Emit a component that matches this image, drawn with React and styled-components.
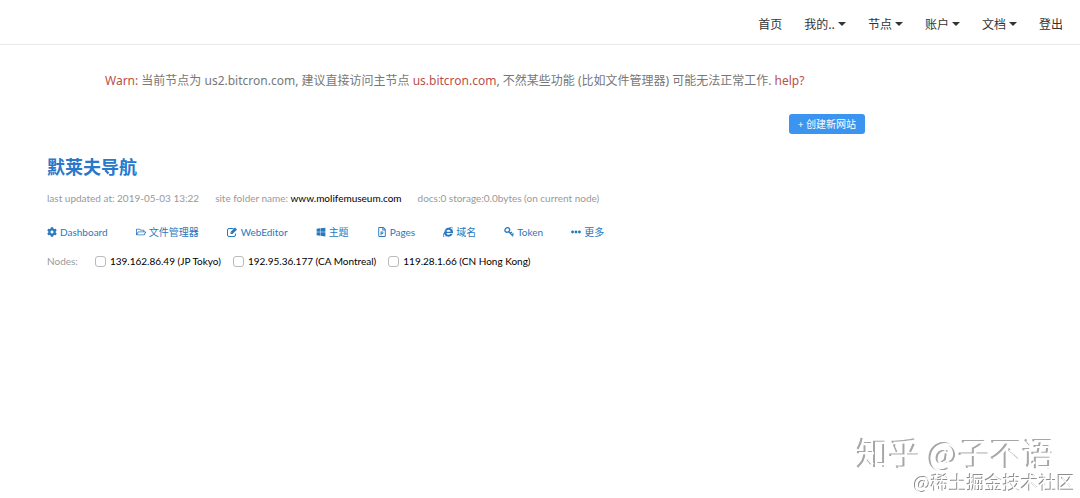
import React from "react";
import styled, { createGlobalStyle, css } from "styled-components";
import {
  FaCog,
  FaRegFolderOpen,
  FaWindows,
  FaRegFilePowerpoint,
  FaInternetExplorer,
  FaEllipsisH,
} from "react-icons/fa";

const GlobalStyle = createGlobalStyle`
  body {
    margin: 0;
    background: #FFFFFF;
    color: #333333;
    font-family: Lato, "Noto Sans CJK SC", sans-serif;
    font-size: 10px;
    line-height: 20px;
  }

  a {
    color: inherit;
    text-decoration: none;
  }
`;

const Page = styled.div`
  min-height: 100vh;
  display: flex;
  flex-direction: column;
`;

const Navbar = styled.nav`
  display: flex;
  justify-content: flex-end;
  gap: 22px;
  padding: 14px 17px 10px;
  border-bottom: 1px solid #E9E9E9;
  font-family: "Noto Sans CJK SC", sans-serif;
  font-size: 12px;
`;

const navItem = css`
  display: flex;
  align-items: center;
  gap: 3px;
  color: #333333;
`;

const NavLink = styled.a`
  ${navItem}
`;

const NavButton = styled.button`
  ${navItem}
  border: 0;
  padding: 0;
  background: none;
  font: inherit;
  cursor: pointer;
`;

const Caret = styled.span`
  border: 4px solid transparent;
  border-top-color: #333333;
  border-bottom-width: 0;
`;

const Main = styled.main`
  flex: 1;
  padding: 26px 47px 0;
`;

const Warning = styled.p`
  margin: 0 58px;
  font-family: "Noto Sans", "Noto Sans CJK SC", sans-serif;
  font-size: 12px;
  color: #777777;
`;

const WarnText = styled.span`
  color: #B9504B;
`;

const Toolbar = styled.div`
  display: flex;
  justify-content: flex-end;
  margin: 23px 168px 0 0;
`;

const CreateButton = styled.button`
  border: 0;
  border-radius: 3px;
  padding: 0 9px;
  background: #3A94F0;
  color: #FFFFFF;
  font: inherit;
  cursor: pointer;
`;

const SiteTitle = styled.h2`
  margin: 20px 0 8px;
  font-size: 18px;
  line-height: 26px;
  font-weight: 700;
  color: #2878CC;
`;

const Meta = styled.div`
  display: flex;
  gap: 16px;
  color: #999999;
`;

const FolderName = styled.span`
  color: #000000;
`;

const Actions = styled.div`
  display: flex;
  gap: 28px;
  margin-top: 14px;
`;

const Action = styled.a`
  && {
    color: #2878BD;
  }
  display: flex;
  align-items: center;
  gap: 3px;

  svg {
    height: 10px;
    width: auto;
  }
`;

const Nodes = styled.div`
  display: flex;
  gap: 12px;
  margin-top: 9px;
`;

const NodesTitle = styled.span`
  margin-right: 5px;
  color: #999999;
`;

const NodeLabel = styled.label`
  display: flex;
  align-items: center;
  gap: 4px;
  color: #000000;
`;

const Checkbox = styled.input`
  appearance: none;
  width: 11px;
  height: 11px;
  margin: 0;
  border: 1px solid #BBBBBB;
  border-radius: 3px;
  background: #FFFFFF;

  &:checked {
    background: #3A94F0;
  }
`;

const Credits = styled.footer`
  position: fixed;
  right: 5px;
  bottom: 6px;
  display: flex;
  flex-direction: column;
  align-items: flex-end;
  pointer-events: none;
  color: #FFFFFF;
  font-family: "Noto Sans CJK SC", sans-serif;
`;

const Author = styled.span`
  margin-right: 20px;
  font-size: 32px;
  line-height: 40px;
  text-shadow: -2px -1px 0 #A6A6A6;
`;

const Community = styled.span`
  font-size: 18px;
  line-height: 20px;
  text-shadow: -1px -1px 0 #8C8C8C;
`;

const EditIcon = () => (
  <svg viewBox="0 0 22 20" fill="none" stroke="currentColor" strokeWidth="2">
    <path d="M13 3H4Q1 3 1 6V16Q1 19 4 19H14Q17 19 17 16V13" />
    <path d="M7 14V10L16 1L20 5L11 14Z" fill="currentColor" stroke="none" />
    <path d="M9 11L10 12" stroke="#FFFFFF" strokeWidth="1" />
  </svg>
);

const KeyIcon = () => (
  <svg viewBox="0 0 20 20" fill="none" stroke="currentColor">
    <ellipse cx="6.5" cy="6" rx="5" ry="4.2" transform="rotate(-35 6.5 6)" strokeWidth="2.6" />
    <path d="M9 9L18.5 18.5M13 13L16 10M16 16L19 13" strokeWidth="2.6" />
  </svg>
);

const navItems = [
  { label: "首页" },
  { label: "我的..", menu: true },
  { label: "节点", menu: true },
  { label: "账户", menu: true },
  { label: "文档", menu: true },
  { label: "登出" },
];

const actions = [
  { label: "Dashboard", Icon: FaCog },
  { label: "文件管理器", Icon: FaRegFolderOpen },
  { label: "WebEditor", Icon: EditIcon },
  { label: "主题", Icon: FaWindows },
  { label: "Pages", Icon: FaRegFilePowerpoint },
  { label: "域名", Icon: FaInternetExplorer },
  { label: "Token", Icon: KeyIcon },
  { label: "更多", Icon: FaEllipsisH },
];

const nodes = [
  "139.162.86.49 (JP Tokyo)",
  "192.95.36.177 (CA Montreal)",
  "119.28.1.66 (CN Hong Kong)",
];

export default function App() {
  return (
    <Page>
      <GlobalStyle />
      <Navbar>
        {navItems.map(({ label, menu }) =>
          menu ? (
            <NavButton key={label} type="button">
              {label}
              <Caret />
            </NavButton>
          ) : (
            <NavLink key={label} href="#">{label}</NavLink>
          )
        )}
      </Navbar>
      <Main>
        <Warning>
          <WarnText>Warn:</WarnText> 当前节点为 us2.bitcron.com, 建议直接访问主节点{" "}
          <WarnText as="a" href="#">us.bitcron.com</WarnText>, 不然某些功能 (比如文件管理器)
          可能无法正常工作. <WarnText as="a" href="#">help?</WarnText>
        </Warning>
        <Toolbar>
          <CreateButton type="button">+ 创建新网站</CreateButton>
        </Toolbar>
        <SiteTitle>默莱夫导航</SiteTitle>
        <Meta>
          <span>last updated at: 2019-05-03 13:22</span>
          <span>site folder name: <FolderName>www.molifemuseum.com</FolderName></span>
          <span>docs:0 storage:0.0bytes (on current node)</span>
        </Meta>
        <Actions>
          {actions.map(({ label, Icon }) => (
            <Action key={label} href="#">
              <Icon />
              {label}
            </Action>
          ))}
        </Actions>
        <Nodes>
          <NodesTitle>Nodes:</NodesTitle>
          {nodes.map((node) => (
            <NodeLabel key={node}>
              <Checkbox type="checkbox" />
              {node}
            </NodeLabel>
          ))}
        </Nodes>
      </Main>
      <Credits>
        <Author>知乎 @子不语</Author>
        <Community>@稀土掘金技术社区</Community>
      </Credits>
    </Page>
  );
}
